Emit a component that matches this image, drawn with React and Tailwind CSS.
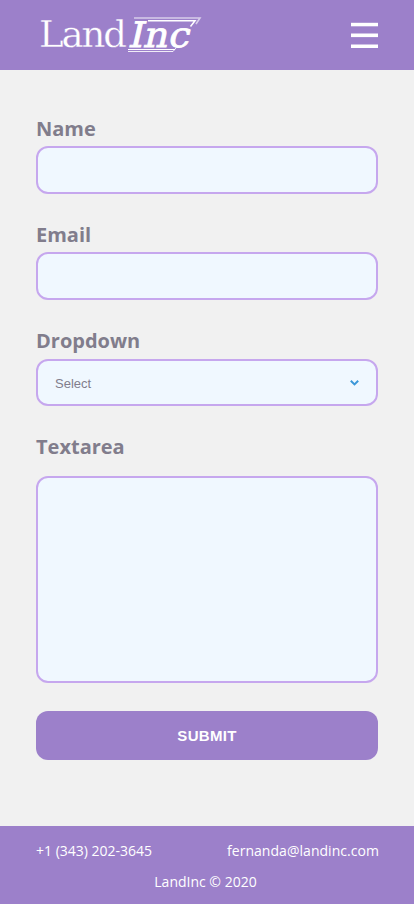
import React from "react";

function Logo() {
  return (
    <svg width="166" height="48" viewBox="38 8 166 48" className="block overflow-visible" fill="#fff" role="img" aria-label="LandInc">
      <text x="39" y="47" fontFamily="'DejaVu Serif', serif" fontSize="37" textLength="88" lengthAdjust="spacing" stroke="#9c80ca" strokeWidth="0.3">
        Land
      </text>
      <text transform="translate(127.5 46.5) skewX(-13)" fontFamily="'DejaVu Serif', serif" fontSize="35" textLength="61" lengthAdjust="spacingAndGlyphs" stroke="#fff" strokeWidth="0.8">
        Inc
      </text>
      <g fill="none" stroke="#fff">
        <path d="M134 18H200L196 24" strokeWidth="1.6" opacity="0.6" />
        <path d="M148 20.8H195L190.5 26.5" strokeWidth="1.5" />
        <path d="M128 49.5H175" strokeWidth="1.2" />
        <path d="M128 51.5H173L176 48" strokeWidth="1" opacity="0.85" />
      </g>
    </svg>
  );
}

function Field({ label, children }) {
  return (
    <label className="block h-[106px]">
      <span className="block h-[31px] text-xl leading-[27px] font-bold text-[#817d8c]">{label}</span>
      {children}
    </label>
  );
}

const box = "block w-full rounded-[12px] border-2 border-[#c6a7ee] bg-[#f0f8ff] outline-none";

export default function App() {
  return (
    <div className="flex h-[904px] w-full flex-col bg-[#f1f1f1] font-['Open_Sans',sans-serif]">
      <header className="flex h-[70px] shrink-0 items-start justify-between bg-[#9c80ca] pr-9 pl-[38px]">
        <div className="pt-2">
          <Logo />
        </div>
        <button aria-label="Menu" className="pt-[22px]">
          <svg width="27" height="27" viewBox="0 0 27 27" className="block" fill="#fff">
            <rect y="0.8" width="27" height="3.5" />
            <rect y="11.5" width="27" height="3.6" />
            <rect y="22.5" width="27" height="3.5" />
          </svg>
        </button>
      </header>

      <form className="flex flex-1 flex-col px-9 pt-[45px]">
        <Field label="Name">
          <input className={`${box} h-12`} />
        </Field>
        <Field label="Email">
          <input className={`${box} h-12`} />
        </Field>
        <Field label="Dropdown">
          <div className={`${box} mt-px flex h-[47px] items-center justify-between px-[17px] font-['Liberation_Sans',sans-serif] text-[13px] text-[#817d8c]`}>
            <span className="pt-0.5">Select</span>
            <svg width="9" height="6" viewBox="0 0 9 6" fill="none" stroke="#3b97d8" strokeWidth="2">
              <path d="M0.8 0.8L4.5 4.4L8.2 0.8" />
            </svg>
          </div>
        </Field>
        <label className="block">
          <span className="block h-[43px] text-xl leading-[27px] font-bold text-[#817d8c]">Textarea</span>
          <textarea className={`${box} h-[207px] resize-none`} />
        </label>
        <button
          type="button"
          className="mt-7 h-[49px] w-full rounded-[12px] bg-[#9c80ca] pt-0.5 font-['Liberation_Sans',sans-serif] text-[15px] font-bold tracking-[0.3px] text-white"
        >
          SUBMIT
        </button>
      </form>

      <footer className="h-[78px] shrink-0 bg-[#9c80ca] px-9 pt-[15px] text-sm leading-5 text-white">
        <div className="-mr-px flex justify-between">
          <span>+1 (343) 202-3645</span>
          <span className="tracking-[0.04px]">fernanda@landinc.com</span>
        </div>
        <p className="mt-[11px] pr-[3px] text-center">LandInc © 2020</p>
      </footer>
    </div>
  );
}
